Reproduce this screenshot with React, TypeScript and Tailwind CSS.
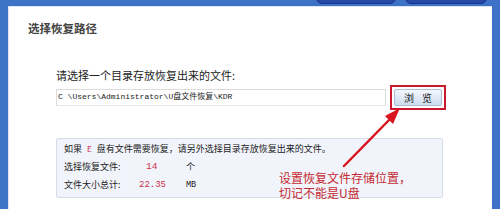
export default function App() {
  return (
    <div className="relative w-[500px] h-[209px] overflow-hidden bg-[#3d73c6] pt-[6px] pl-[8px] pr-[8px]" style={{ fontFamily: '"Noto Sans CJK SC", "Noto Sans", sans-serif' }}>
      {/* window chrome buttons peeking at the top */}
      <div className="absolute top-[-6px] left-[316px] w-[80px] h-[10px] rounded-b-[6px] bg-[#2649a8] border border-[#1a3488]"></div>
      <div className="absolute top-[-6px] left-[405px] w-[82px] h-[10px] rounded-b-[6px] bg-[#2649a8] border border-[#1a3488]"></div>

      <div className="h-full bg-white border-l border-t border-[#dfe6f2]">
        <div className="pl-[19px] pt-[12px] text-[11.5px] leading-[18px] font-bold text-[#444]">选择恢复路径</div>

        <div className="pl-[47px] pt-[31px] w-[438px]">
          <div className="text-[11px] leading-[14px] text-[#222]">请选择一个目录存放恢复出来的文件:</div>

          <div className="flex items-center mt-[3px]">
            <div className="w-[330px] h-[17px] border border-[#dcdcdc] border-b-[#e6e6e6] flex items-center pl-[1px] pb-[2px] text-[8px] text-[#222] whitespace-nowrap" style={{ fontFamily: '"Liberation Mono", "Noto Sans CJK SC", monospace' }}>
              C \Users\Administrator\U盘文件恢复\KDR
            </div>
            <div className="ml-[4px] border-[2px] border-[#c8192f] p-[2px]">
              <div className="w-[48px] h-[17px] rounded-[2px] border border-[#a9bdd6] bg-gradient-to-b from-[#f4f8fd] to-[#cddcf0] flex items-center justify-center text-[10px] text-[#222] tracking-[8px] pl-[8px]">
                浏览
              </div>
            </div>
          </div>

          <div className="mt-[28px] w-[387px] h-[60px] border border-[#d6dde8] bg-[#f1f4fa] rounded-[2px] pl-[7px] pt-[1px] text-[9px] leading-[18px] text-[#222]">
            <div className="w-fit whitespace-nowrap">如果<span className="text-[#d0304a] text-[8px] mx-[5px]">E</span>盘有文件需要恢复，请另外选择目录存放恢复出来的文件。</div>
            <div className="flex w-fit">
              <span className="w-[82px]">选择恢复文件:</span>
              <span className="w-[40px] text-[#d0304a] text-[9.5px]" style={{ fontFamily: '"Liberation Mono", monospace' }}>14</span>
              <span>个</span>
            </div>
            <div className="flex w-fit">
              <span className="w-[75px]">文件大小总计:</span>
              <span className="w-[47px] text-[#d0304a] text-[9px]" style={{ fontFamily: '"Liberation Mono", monospace' }}>22.35</span>
              <span className="text-[8.5px]" style={{ fontFamily: '"Liberation Mono", monospace' }}>MB</span>
            </div>
          </div>
        </div>
      </div>

      {/* red annotation */}
      <svg className="absolute left-0 top-0" width="500" height="209" viewBox="0 0 500 209">
        <line x1="344" y1="166" x2="393" y2="116" stroke="#d9141e" strokeWidth="2.5" strokeLinecap="round" />
        <polygon points="400,108 385,116 393,124" fill="#d9141e" />
      </svg>
      <div className="absolute left-[279px] top-[170px] text-[12px] leading-[15px] text-[#c42a30]">
        <div>设置恢复文件存储位置，</div>
        <div>切记不能是U盘</div>
      </div>
    </div>
  );
}
